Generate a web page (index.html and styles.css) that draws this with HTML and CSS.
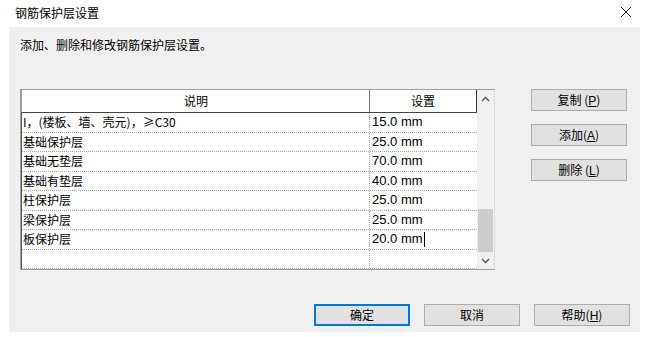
FILE: index.html
```html
<!DOCTYPE html>
<html lang="zh-CN">
<head>
    <meta charset="UTF-8">
    <title>钢筋保护层设置</title>
    <link rel="stylesheet" href="styles.css">
</head>
<body>
    <div class="dialog">
        <div class="titlebar">
            <span class="title">钢筋保护层设置</span>
            <svg class="close" width="12" height="12" viewBox="0 0 12 12">
                <path d="M1 1 L11 11 M11 1 L1 11" stroke="#222" stroke-width="1"/>
            </svg>
        </div>

        <div class="panel">
            <p class="intro">添加、删除和修改钢筋保护层设置。</p>

            <div class="main">
                <div class="grid-box">
                    <div class="grid">
                        <div class="row head">
                            <div class="cell desc">说明</div>
                            <div class="cell val">设置</div>
                        </div>
                        <div class="row"><div class="cell desc">I，(楼板、墙、壳元)，≥C30</div><div class="cell val">15.0 mm</div></div>
                        <div class="row"><div class="cell desc">基础保护层</div><div class="cell val">25.0 mm</div></div>
                        <div class="row"><div class="cell desc">基础无垫层</div><div class="cell val">70.0 mm</div></div>
                        <div class="row"><div class="cell desc">基础有垫层</div><div class="cell val">40.0 mm</div></div>
                        <div class="row"><div class="cell desc">柱保护层</div><div class="cell val">25.0 mm</div></div>
                        <div class="row"><div class="cell desc">梁保护层</div><div class="cell val">25.0 mm</div></div>
                        <div class="row"><div class="cell desc">板保护层</div><div class="cell val editing">20.0 mm<span class="caret"></span></div></div>
                        <div class="row"><div class="cell desc"></div><div class="cell val"></div></div>
                    </div>
                    <div class="scrollbar">
                        <div class="arrow">
                            <svg width="9" height="6" viewBox="0 0 9 6"><path d="M1 5 L4.5 1.5 L8 5" fill="none" stroke="#555" stroke-width="1.4"/></svg>
                        </div>
                        <div class="track"><div class="thumb"></div></div>
                        <div class="arrow">
                            <svg width="9" height="6" viewBox="0 0 9 6"><path d="M1 1 L4.5 4.5 L8 1" fill="none" stroke="#555" stroke-width="1.4"/></svg>
                        </div>
                    </div>
                </div>

                <div class="side">
                    <button class="btn">复制 (<u>P</u>)</button>
                    <button class="btn">添加(<u>A</u>)</button>
                    <button class="btn">删除 (<u>L</u>)</button>
                </div>
            </div>

            <div class="footer">
                <button class="btn wide default">确定</button>
                <button class="btn wide">取消</button>
                <button class="btn wide">帮助(<u>H</u>)</button>
            </div>
        </div>
    </div>
</body>
</html>
```

FILE: styles.css
```css
body {
    margin: 0;
    background: #ffffff;
    font-family: "Noto Sans CJK SC", "Liberation Sans", sans-serif;
    font-size: 12px;
    color: #000;
}

.dialog {
    width: 660px;
    height: 337px;
}

.titlebar {
    height: 27px;
    display: flex;
    align-items: center;
    justify-content: space-between;
    padding: 0 28px 0 15px;
}

.title {
    line-height: 14px;
    margin-top: -2px;
}

.close {
    margin-top: -3px;
}

.panel {
    margin: 0 20px 0 9px;
    height: 305px;
    background: #f0f0f0;
    padding: 11px 0 0 11px;
    box-sizing: border-box;
}

.intro {
    margin: 0;
    line-height: 14px;
}

.main {
    display: flex;
    margin-top: 37px;
}

.grid-box {
    display: flex;
    width: 475px;
    height: 181px;
    border: 1px solid #a0a0a0;
    border-right-color: #dcdcdc;
    box-sizing: border-box;
    background: #ffffff;
}

.grid {
    width: 456px;
    border-left: 1px solid #555;
    border-bottom: 1px dotted #999;
}

.row {
    display: flex;
    height: 19.5px;
    border-bottom: 1px dotted #a8a8a8;
    box-sizing: border-box;
}

.row.head {
    height: 23px;
    border-bottom: 1px solid #444;
    margin-left: -1px;
    border-left: 1px solid #a0a0a0;
}

.cell {
    line-height: 18px;
    white-space: nowrap;
    overflow: hidden;
}

.desc {
    width: 346px;
    padding-left: 1px;
    border-right: 1px dotted #a8a8a8;
}

.val {
    flex: 1;
    padding-left: 2px;
    font-family: "Liberation Sans", "Noto Sans CJK SC", sans-serif;
    font-size: 13px;
}

.head .cell {
    text-align: center;
    line-height: 22px;
    font-family: "Noto Sans CJK SC", sans-serif;
    font-size: 12px;
}

.head .desc {
    border-right: 1px solid #777;
}

.head .val {
    border-right: 1px solid #333;
    padding-left: 0;
}

.editing {
    display: flex;
    align-items: center;
}

.caret {
    display: inline-block;
    width: 1px;
    height: 15px;
    background: #000;
    margin-left: 1px;
}

.scrollbar {
    width: 17px;
    display: flex;
    flex-direction: column;
    background: #f0f0f0;
}

.arrow {
    height: 17px;
    display: flex;
    align-items: center;
    justify-content: center;
}

.track {
    flex: 1;
    position: relative;
}

.thumb {
    position: absolute;
    left: 1px;
    right: 1px;
    top: 102px;
    height: 43px;
    background: #cdcdcd;
}

.side {
    display: flex;
    flex-direction: column;
    gap: 13px;
    margin-left: 36px;
}

.btn {
    width: 96px;
    height: 22px;
    padding: 0;
    background: #e1e1e1;
    border: 1px solid #adadad;
    font-family: "Noto Sans CJK SC", sans-serif;
    font-size: 12px;
    color: #000;
    line-height: 18px;
}

.btn u {
    font-family: "Liberation Sans", sans-serif;
}

.footer {
    display: flex;
    justify-content: flex-end;
    gap: 14px;
    margin-top: 34px;
    padding-right: 10px;
}

.btn.wide {
    width: 96px;
}

.btn.default {
    border: 2px solid #0078d7;
}
```
